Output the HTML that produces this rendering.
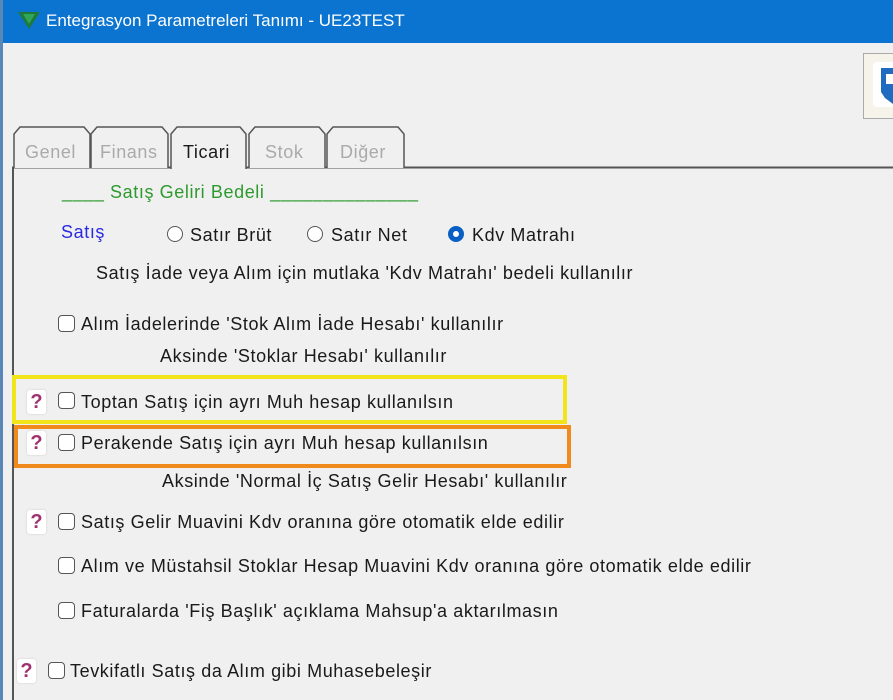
<!DOCTYPE html>
<html><head><meta charset="utf-8"><style>
html,body{margin:0;padding:0;width:893px;height:700px;overflow:hidden;background:#f0f0f0;font-family:"Liberation Sans",sans-serif;}
.a{position:absolute;white-space:nowrap;font-size:18px;letter-spacing:0.6px;color:#1a1a1a;line-height:20px;}
.cb{position:absolute;width:15px;height:15px;border:1.5px solid #555;border-radius:4px;background:#fff;}
.q{position:absolute;width:19px;height:24px;background:#fff;border-radius:3px;color:#a0306e;font-weight:bold;font-size:20px;line-height:24px;text-align:center;box-shadow:0 0 2px #ccc;}
.rd{position:absolute;width:14px;height:14px;border:1.5px solid #555;border-radius:50%;background:#fff;}
</style></head><body>
<div style="position:absolute;left:0;top:0;width:893px;height:43px;background:#0a74d0;"></div>
<div style="position:absolute;left:0;top:0;width:3px;height:700px;background:#5a86b8;"></div>
<div style="position:absolute;left:3px;top:43px;width:890px;height:657px;background:#f0f0f0;"></div>
<svg style="position:absolute;left:18px;top:12px" width="22" height="18"><polygon points="0,0 22,0 11,17" fill="#1f7a3a"/><polygon points="5,2 17,2 11,12" fill="#2fa55a"/></svg>
<div class="a" style="left:46px;top:11px;color:#fff;font-size:17px;letter-spacing:0;">Entegrasyon Parametreleri Tanımı - UE23TEST</div>
<div style="position:absolute;left:863px;top:53px;width:40px;height:64px;border:1px solid #aaa;background:#f6f3ea;"></div>
<div style="position:absolute;left:873px;top:62px;width:30px;height:45px;background:#fff;border-radius:4px;"></div>
<svg style="position:absolute;left:881px;top:68px" width="12" height="36"><path d="M0 0 H12 V36 L4 30 L0 24 Z" fill="#1f6bbf"/><rect x="5" y="6" width="7" height="10" fill="#fff"/></svg>
<svg style="position:absolute;left:0;top:120px" width="893" height="60">
<line x1="12" y1="47.5" x2="893" y2="47.5" stroke="#555" stroke-width="2"/>
<g fill="#f0f0f0" stroke="#555" stroke-width="1.5">
<path d="M14 48 V14 L20 7 H84 L90 14 V48"/>
<path d="M91 48 V14 L97 7 H162 L168 14 V48"/>
<path d="M249 48 V14 L255 7 H319 L325 14 V48"/>
<path d="M327 48 V14 L333 7 H398 L404 14 V48"/>
</g>
<path d="M171 49 V14 L177 7 H240 L246 14 V49" fill="#f0f0f0" stroke="#555" stroke-width="1.5"/>
<rect x="172" y="46" width="73" height="4" fill="#f0f0f0"/>
</svg>
<div style="position:absolute;left:12px;top:167px;width:2px;height:533px;background:#555;"></div>
<div class="a" style="left:25px;top:142px;color:#aaa;">Genel</div>
<div class="a" style="left:100px;top:142px;color:#aaa;">Finans</div>
<div class="a" style="left:183px;top:142px;">Ticari</div>
<div class="a" style="left:265px;top:142px;color:#aaa;">Stok</div>
<div class="a" style="left:340px;top:142px;color:#aaa;">Diğer</div>

<div class="a" style="left:62px;top:182px;color:#2e9a2e;">____ Satış Geliri Bedeli ______________</div>
<div class="a" style="left:61px;top:222px;color:#2a2ae0;">Satış</div>
<div class="rd" style="left:167px;top:226px;"></div>
<div class="a" style="left:190px;top:225px;">Satır Brüt</div>
<div class="rd" style="left:307px;top:226px;"></div>
<div class="a" style="left:331px;top:225px;">Satır Net</div>
<div class="rd" style="left:448px;top:226px;border:5px solid #0a5fc4;width:6px;height:6px;"></div>
<div class="a" style="left:472px;top:225px;">Kdv Matrahı</div>
<div class="a" style="left:96px;top:263px;">Satış İade veya Alım için mutlaka 'Kdv Matrahı' bedeli kullanılır</div>

<div class="cb" style="left:58px;top:315px;"></div>
<div class="a" style="left:81px;top:314px;">Alım İadelerinde 'Stok Alım İade Hesabı' kullanılır</div>
<div class="a" style="left:160px;top:346px;">Aksinde 'Stoklar Hesabı' kullanılır</div>

<div style="position:absolute;left:12px;top:375px;width:547px;height:41px;border:4px solid #f2e41a;"></div>
<div class="q" style="left:27px;top:390px;">?</div>
<div class="cb" style="left:58px;top:392px;"></div>
<div class="a" style="left:81px;top:392px;">Toptan Satış için ayrı Muh hesap kullanılsın</div>

<div style="position:absolute;left:14px;top:425px;width:549px;height:35px;border:4px solid #f08a1d;"></div>
<div class="q" style="left:27px;top:431px;">?</div>
<div class="cb" style="left:58px;top:434px;"></div>
<div class="a" style="left:81px;top:433px;">Perakende Satış için ayrı Muh hesap kullanılsın</div>
<div class="a" style="left:162px;top:471px;">Aksinde 'Normal İç Satış Gelir Hesabı' kullanılır</div>

<div class="q" style="left:27px;top:510px;">?</div>
<div class="cb" style="left:58px;top:513px;"></div>
<div class="a" style="left:81px;top:512px;">Satış Gelir Muavini Kdv oranına göre otomatik elde edilir</div>
<div class="cb" style="left:58px;top:557px;"></div>
<div class="a" style="left:81px;top:556px;">Alım ve Müstahsil Stoklar Hesap Muavini Kdv oranına göre otomatik elde edilir</div>
<div class="cb" style="left:58px;top:602px;"></div>
<div class="a" style="left:81px;top:601px;">Faturalarda 'Fiş Başlık' açıklama Mahsup'a aktarılmasın</div>

<div class="q" style="left:17px;top:659px;">?</div>
<div class="cb" style="left:48px;top:662px;"></div>
<div class="a" style="left:70px;top:661px;">Tevkifatlı Satış da Alım gibi Muhasebeleşir</div>
</body></html>
